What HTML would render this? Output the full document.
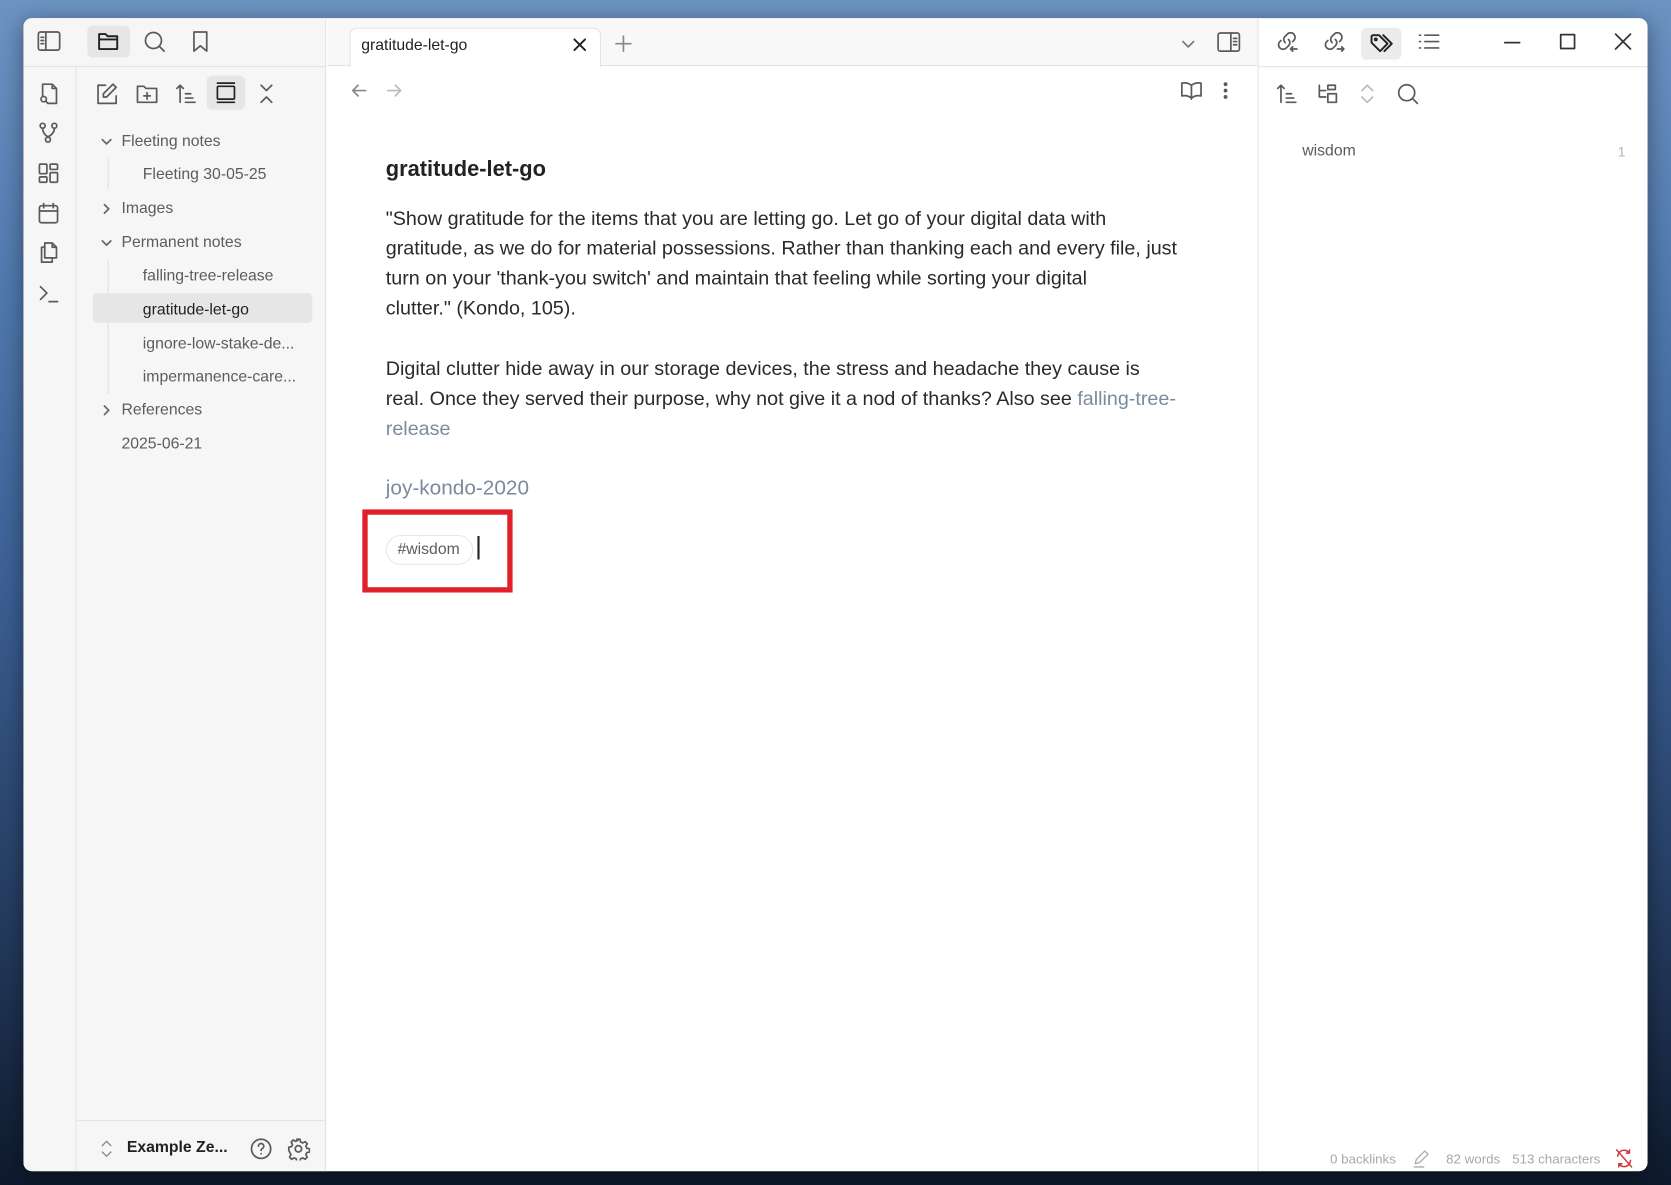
<!DOCTYPE html>
<html><head><meta charset="utf-8"><style>
*{margin:0;padding:0;box-sizing:border-box}
html,body{width:1671px;height:1185px;overflow:hidden;font-family:"Liberation Sans",sans-serif}
body{background:linear-gradient(180deg,#6d93c2 0%,#4f78ad 25%,#3b5f93 50%,#22385a 80%,#0e1a2c 100%)}
#s{position:absolute;left:0;top:0;width:1568px;height:1112px;transform:scale(1.06569);transform-origin:0 0}
.win{position:absolute;left:22px;top:17px;width:1524px;height:1082px;background:#fff;border-radius:8px;overflow:hidden;box-shadow:0 4px 20px rgba(0,0,0,.4)}
.abs{position:absolute}
svg{position:absolute;fill:none;stroke:#5a5a5a;stroke-width:1.6;stroke-linecap:round;stroke-linejoin:round}
.side{position:absolute;left:0;top:0;width:284px;height:1082px;background:#f6f6f6;border-right:1px solid #e3e3e3}
.rib{position:absolute;left:0;top:45px;width:50px;height:1037px;border-right:1px solid #e6e6e6}
.hl{position:absolute;height:1px;background:#e3e3e3}
.it{position:absolute;font-size:14.8px;color:#5c5c5c;white-space:nowrap}
.ed{position:absolute;left:340px;font-size:18.5px;color:#2a2a2a;line-height:28px;white-space:nowrap}
.lk{color:#7a8b9c}
.st{position:absolute;top:1064px;font-size:12.5px;color:#a8a8a8}
</style></head><body><div id="s">
<div class="win">
 <div class="side"></div>
 <div class="hl" style="left:0;top:45px;width:284px"></div>
 <div class="rib"></div>
 <div class="abs" style="left:285px;top:0;width:873px;height:45px;background:#f8f8f8;border-bottom:1px solid #e3e3e3"></div>
 <div class="abs" style="left:306px;top:9px;width:236px;height:37px;background:#fff;border:1px solid #e3e3e3;border-bottom:none;border-radius:7px 7px 0 0"></div>
 <div class="it" style="left:317px;top:18px;color:#222;font-size:14.8px">gratitude-let-go</div>
 <svg style="left:515px;top:18px" width="14" height="14" viewBox="0 0 14 14"><path d="M2 2L12 12M12 2L2 12" stroke="#222" stroke-width="1.8"/></svg>
 <svg style="left:555px;top:16px" width="16" height="16" viewBox="0 0 16 16"><path d="M8 1V15M1 8H15" stroke="#888"/></svg>
 <svg style="left:1086px;top:17px" width="14" height="14" viewBox="0 0 14 14"><path d="M2 5L7 10L12 5" stroke="#777"/></svg>
 <svg style="left:1120px;top:13px" width="22" height="20" viewBox="0 0 22 20"><rect x="1" y="1" width="20" height="17" rx="2"/><path d="M13 1V18M15.5 6H18.5M15.5 9H18.5M15.5 12H18.5"/></svg>
 <div class="abs" style="left:1158px;top:0;width:366px;height:1082px;border-left:1px solid #e3e3e3"></div>
 <div class="hl" style="left:1158px;top:45px;width:366px"></div>
 <svg style="left:1175px;top:11px" width="22" height="22" viewBox="0 0 22 22"><path d="M9 12a4 4 0 0 1 0-6l2-2a4 4 0 0 1 6 6l-1 1M12 9a4 4 0 0 1 0 6l-2 2a4 4 0 0 1-6-6l1-1M14 18h6M16 16l-2 2 2 2"/></svg>
 <svg style="left:1219px;top:11px" width="22" height="22" viewBox="0 0 22 22"><path d="M9 12a4 4 0 0 1 0-6l2-2a4 4 0 0 1 6 6l-1 1M12 9a4 4 0 0 1 0 6l-2 2a4 4 0 0 1-6-6l1-1M14 18h6M18 16l2 2-2 2"/></svg>
 <div class="abs" style="left:1255px;top:9px;width:38px;height:30px;background:#ececec;border-radius:5px"></div>
 <svg style="left:1263px;top:13px" width="24" height="22" viewBox="0 0 24 22"><path d="M2 4v6l8 8 7-7-8-8H3zM13 3l8 8-7 7" stroke="#222" stroke-width="1.8"/><circle cx="6" cy="7" r="1" stroke="#222"/></svg>
 <svg style="left:1308px;top:13px" width="22" height="18" viewBox="0 0 22 18"><path d="M2 3h1M2 9h1M2 15h1M7 3h13M7 9h13M7 15h13"/></svg>
 <svg style="left:1389px;top:21px" width="16" height="4" viewBox="0 0 16 4"><path d="M1 2H15" stroke="#333"/></svg>
 <svg style="left:1441px;top:14px" width="16" height="16" viewBox="0 0 16 16"><rect x="1.5" y="1.5" width="13" height="13" stroke="#333"/></svg>
 <svg style="left:1493px;top:14px" width="16" height="16" viewBox="0 0 16 16"><path d="M1 1L15 15M15 1L1 15" stroke="#333"/></svg>
 <svg style="left:1175px;top:60px" width="22" height="22" viewBox="0 0 22 22"><path d="M5 19V3M2 6l3-3 3 3M10 11h5M10 15h7M10 19h9"/></svg>
 <svg style="left:1213px;top:60px" width="22" height="22" viewBox="0 0 22 22"><path d="M3 3v11h6M3 8h6M11 3h7v4h-7zM11 11h8v8h-8z"/></svg>
 <svg style="left:1253px;top:61px" width="16" height="20" viewBox="0 0 16 20"><path d="M3 7l5-5 5 5M3 13l5 5 5-5" stroke="#bbb"/></svg>
 <svg style="left:1288px;top:60px" width="22" height="22" viewBox="0 0 22 22"><circle cx="10" cy="10" r="7.5"/><path d="M15.5 15.5L20 20"/></svg>
 <div class="it" style="left:1200px;top:117px;color:#5c5c5c">wisdom</div>
 <div class="it" style="left:1496px;top:118px;color:#b5b5b5;font-size:13px">1</div>
 <svg style="left:13px;top:12px" width="22" height="20" viewBox="0 0 22 20"><rect x="1" y="1" width="20" height="17" rx="2"/><path d="M8 1V18M3.5 6H6M3.5 9H6M3.5 12H6"/></svg>
 <div class="abs" style="left:60px;top:7px;width:40px;height:30px;background:#e6e6e6;border-radius:5px"></div>
 <svg style="left:69px;top:12px" width="22" height="20" viewBox="0 0 22 20"><path d="M2 3h6l2 2h9v12H2zM2 8h17" stroke="#222" stroke-width="1.8"/></svg>
 <svg style="left:112px;top:11px" width="22" height="22" viewBox="0 0 22 22"><circle cx="10" cy="10" r="7.5"/><path d="M15.5 15.5L20 20"/></svg>
 <svg style="left:157px;top:11px" width="18" height="22" viewBox="0 0 18 22"><path d="M3 2h12v18l-6-5-6 5z"/></svg>
 <svg style="left:13px;top:60px" width="22" height="22" viewBox="0 0 22 22"><path d="M5 13V2h9l4 4v14h-8M14 2v4h4"/><circle cx="6" cy="16" r="2.5"/><path d="M8 18l2 2"/></svg>
 <svg style="left:13px;top:97px" width="22" height="22" viewBox="0 0 22 22"><circle cx="5" cy="4" r="2.3"/><circle cx="16" cy="4" r="2.3"/><circle cx="10" cy="17" r="2.3"/><path d="M5 6.5q0 5 5 8M16 6.5q0 5-6 8"/></svg>
 <svg style="left:13px;top:135px" width="22" height="22" viewBox="0 0 22 22"><rect x="2" y="2" width="7" height="9" rx="1"/><rect x="12" y="2" width="7" height="5" rx="1"/><rect x="2" y="14" width="7" height="5" rx="1"/><rect x="12" y="10" width="7" height="9" rx="1"/></svg>
 <svg style="left:13px;top:172px" width="22" height="22" viewBox="0 0 22 22"><rect x="2" y="4" width="17" height="16" rx="2"/><path d="M2 9h17M6 2v4M15 2v4"/></svg>
 <svg style="left:13px;top:209px" width="22" height="22" viewBox="0 0 22 22"><path d="M7 2h7l4 4v10h-11zM14 2v4h4M7 6H4v14h10v-4"/></svg>
 <svg style="left:13px;top:247px" width="22" height="22" viewBox="0 0 22 22"><path d="M3 5l6 6-6 6M11 19h8"/></svg>
 <svg style="left:67px;top:60px" width="22" height="22" viewBox="0 0 22 22"><path d="M10 3H3v17h17v-7M17 2l3 3-9 9H8v-3z"/></svg>
 <svg style="left:105px;top:60px" width="22" height="22" viewBox="0 0 22 22"><path d="M2 4h6l2 2h10v13H2zM11 10v6M8 13h6"/></svg>
 <svg style="left:142px;top:60px" width="22" height="22" viewBox="0 0 22 22"><path d="M5 19V3M2 6l3-3 3 3M10 11h5M10 15h7M10 19h9"/></svg>
 <div class="abs" style="left:172px;top:54px;width:36px;height:32px;background:#e6e6e6;border-radius:5px"></div>
 <svg style="left:179px;top:59px" width="22" height="22" viewBox="0 0 22 22"><rect x="3" y="5" width="16" height="12" rx="1" stroke="#222"/><path d="M3 2h16M3 20h16" stroke="#222"/></svg>
 <svg style="left:219px;top:60px" width="18" height="22" viewBox="0 0 18 22"><path d="M4 3l5 5 5-5M4 19l5-5 5 5"/></svg>
 <svg style="left:72px;top:110px" width="12" height="12" viewBox="0 0 12 12"><path d="M2 4l4 4 4-4" stroke="#666"/></svg>
 <div class="it" style="left:92px;top:108px">Fleeting notes</div>
 <div class="abs" style="left:79px;top:132px;width:1px;height:28px;background:#ddd"></div>
 <div class="it" style="left:112px;top:139px">Fleeting 30-05-25</div>
 <svg style="left:72px;top:173px" width="12" height="12" viewBox="0 0 12 12"><path d="M4 2l4 4-4 4" stroke="#666"/></svg>
 <div class="it" style="left:92px;top:171px">Images</div>
 <svg style="left:72px;top:205px" width="12" height="12" viewBox="0 0 12 12"><path d="M2 4l4 4 4-4" stroke="#666"/></svg>
 <div class="it" style="left:92px;top:203px">Permanent notes</div>
 <div class="abs" style="left:79px;top:227px;width:1px;height:126px;background:#ddd"></div>
 <div class="it" style="left:112px;top:234px">falling-tree-release</div>
 <div class="abs" style="left:65px;top:258px;width:206px;height:28px;background:#e6e6e6;border-radius:4px"></div>
 <div class="it" style="left:112px;top:266px;color:#222">gratitude-let-go</div>
 <div class="it" style="left:112px;top:298px">ignore-low-stake-de...</div>
 <div class="it" style="left:112px;top:329px">impermanence-care...</div>
 <svg style="left:72px;top:362px" width="12" height="12" viewBox="0 0 12 12"><path d="M4 2l4 4-4 4" stroke="#666"/></svg>
 <div class="it" style="left:92px;top:360px">References</div>
 <div class="it" style="left:92px;top:392px">2025-06-21</div>
 <div class="hl" style="left:50px;top:1034px;width:234px"></div>
 <svg style="left:72px;top:1052px" width="12" height="18" viewBox="0 0 12 18"><path d="M2 6l4-4 4 4M2 12l4 4 4-4" stroke="#888" stroke-width="1.2"/></svg>
 <div class="it" style="left:97px;top:1052px;color:#222;font-weight:bold;font-size:14.8px">Example Ze...</div>
 <svg style="left:212px;top:1050px" width="22" height="22" viewBox="0 0 22 22"><circle cx="11" cy="11" r="9"/><path d="M8.5 8.5a2.5 2.5 0 1 1 3.5 2.3c-.7.4-1 .9-1 1.7M11 15.5v.3"/></svg>
 <svg style="left:247px;top:1050px" width="22" height="22" viewBox="0 0 22 22"><circle cx="11" cy="11" r="3"/><path d="M9.5 2h3l.5 2.5 2 1 2.3-1.3 2 2-1.3 2.3 1 2 2.5.5v3l-2.5.5-1 2 1.3 2.3-2 2-2.3-1.3-2 1-.5 2.5h-3l-.5-2.5-2-1-2.3 1.3-2-2 1.3-2.3-1-2L2 12.5v-3l2.5-.5 1-2-1.3-2.3 2-2 2.3 1.3 2-1z"/></svg>
 <svg style="left:307px;top:60px" width="16" height="16" viewBox="0 0 16 16"><path d="M14 8H2M7 3L2 8l5 5" stroke="#888"/></svg>
 <svg style="left:340px;top:60px" width="16" height="16" viewBox="0 0 16 16"><path d="M2 8h12M9 3l5 5-5 5" stroke="#bbb"/></svg>
 <svg style="left:1086px;top:58px" width="20" height="20" viewBox="0 0 20 20"><path d="M10 5v13M10 5Q6 2 1 3v12q5-1 9 2 4-3 9-2V3q-5-1-9 2"/></svg>
 <svg style="left:1122px;top:59px" width="12" height="18" viewBox="0 0 12 18"><circle cx="6" cy="3" r="1" fill="#666"/><circle cx="6" cy="9" r="1" fill="#666"/><circle cx="6" cy="15" r="1" fill="#666"/></svg>
 <div class="ed" style="top:128px;font-size:20.5px;font-weight:bold;color:#222">gratitude-let-go</div>
 <div class="ed" style="top:174px">"Show gratitude for the items that you are letting go. Let go of your digital data with<br>gratitude, as we do for material possessions. Rather than thanking each and every file, just<br>turn on your 'thank-you switch' and maintain that feeling while sorting your digital<br>clutter." (Kondo, 105).</div>
 <div class="ed" style="top:315px">Digital clutter hide away in our storage devices, the stress and headache they cause is<br>real. Once they served their purpose, why not give it a nod of thanks? Also see <span class="lk">falling-tree-</span><br><span class="lk">release</span></div>
 <div class="ed lk" style="top:427px;font-size:19.5px">joy-kondo-2020</div>
 <div class="abs" style="left:318px;top:461px;width:141px;height:78px;border:5px solid #e0212b"></div>
 <div class="abs" style="left:340px;top:485px;width:82px;height:28px;border:1px solid #e8e8e8;border-radius:14px;font-size:14.8px;color:#5c5c5c;padding:5px 0 0 10px">#wisdom</div>
 <div class="abs" style="left:426px;top:486px;width:2px;height:22px;background:#222"></div>
 <div class="st" style="left:1226px">0 backlinks</div>
 <svg style="left:1303px;top:1061px" width="18" height="18" viewBox="0 0 18 18"><path d="M3 14l1-4 8-8 3 3-8 8zM2 17h9" stroke="#aaa" stroke-width="1.2"/></svg>
 <div class="st" style="left:1335px">82 words</div>
 <div class="st" style="left:1397px">513 characters</div>
 <svg style="left:1493px;top:1060px" width="18" height="20" viewBox="0 0 18 20"><path d="M3 8a6 6 0 0 1 11-3M15 12a6 6 0 0 1-11 3M14 2v3h-3M4 18v-3h3M2 2l14 16" stroke="#d0333e" stroke-width="1.4"/></svg>
</div>
</div></body></html>
